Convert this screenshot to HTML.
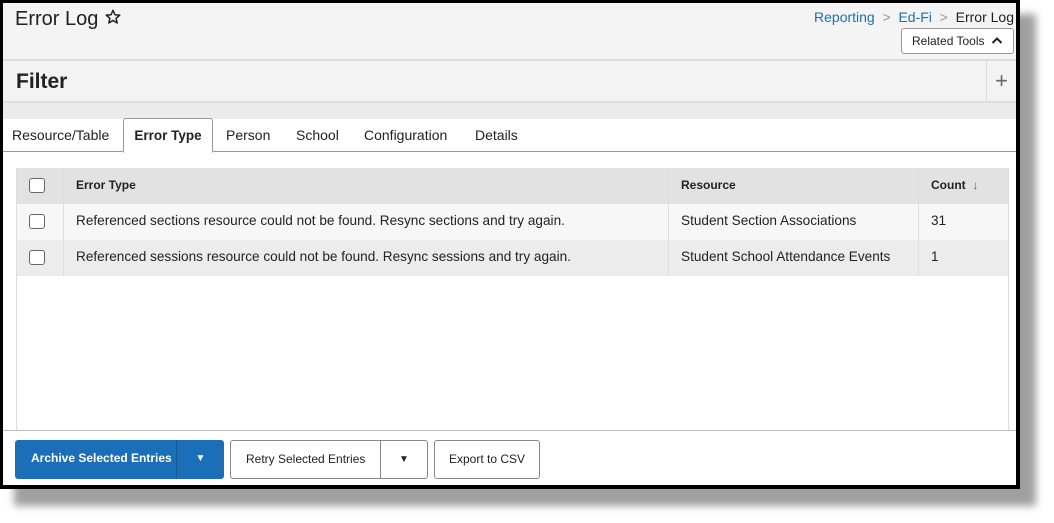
<!DOCTYPE html>
<html><head><style>
*{box-sizing:border-box;margin:0;padding:0}
body{width:1054px;height:523px;background:#fff;position:relative;overflow:hidden;font-family:"Liberation Sans",Arial,sans-serif;color:#222}
.shadow{position:absolute;left:14px;top:14px;width:1022px;height:492px;background:#888;filter:blur(4px);opacity:.8}
.frame{position:absolute;left:0;top:0;width:1020px;height:489px;background:#000}
.page{position:absolute;left:3px;top:3px;width:1013px;height:482px;background:#fff;overflow:hidden}
.top{position:absolute;left:0;top:0;width:1013px;height:56px;background:#f4f4f4}
.title{position:absolute;left:12px;top:5px;font-size:20px;color:#222}
.bc{position:absolute;right:2px;top:6px;font-size:14px;color:#999}
.bc a{color:#1a6fb5}
.rt{position:absolute;right:2px;top:25px;width:113px;height:26px;border:1px solid #999;border-radius:3px;background:#fff;font-size:12px;line-height:24px;padding-left:10px}
.filter{position:absolute;left:0;top:56px;width:1013px;height:44px;background:#f3f3f3;border-top:2px solid #ddd;border-bottom:2px solid #ddd}
.filter h1{position:absolute;left:13px;top:9px;font-size:21px;font-weight:bold}
.plus{position:absolute;right:0;top:0;width:30px;height:42px;border-left:1px solid #ddd;font-size:22px;color:#666;text-align:center;line-height:40px}
.gap{position:absolute;left:0;top:100px;width:1013px;height:16px;background:#ebebeb}
.tabs{position:absolute;left:0;top:116px;width:1013px;height:33px;border-bottom:1px solid #999;font-size:14px}
.tab{position:absolute;top:8px}
.act{position:absolute;left:120px;top:-1px;width:90px;height:35px;border:1px solid #999;border-bottom:1px solid #fff;background:#fff;border-radius:3px 3px 0 0;text-align:center;padding-top:9px;font-weight:bold;font-size:13.5px}
.tbl{position:absolute;left:13px;top:165px;width:993px;height:262px;border-left:1px solid #ddd;border-right:1px solid #ddd}
.row{position:absolute;left:0;width:991px;height:36px;font-size:13.6px}
.row div{position:absolute;top:0;height:36px;line-height:34px}
.cb{position:absolute;left:12px;top:10px;width:16px;height:15px;border:1px solid #666;border-radius:3px;background:#fff}
.c1{left:46px;border-left:1px solid #ddd;padding-left:12px;width:605px}
.c2{left:651px;border-left:1px solid #ddd;padding-left:12px;width:250px}
.c3{left:901px;border-left:1px solid #ddd;padding-left:12px;width:90px}
.h{font-size:12px;font-weight:bold}
.foot{position:absolute;left:0;top:427px;width:1013px;height:1px;background:#bbb}
.btn{position:absolute;top:437px;height:39px;border-radius:3px;font-size:12px;line-height:37px}
</style></head><body>
<div class="shadow"></div>
<div class="frame"></div>
<div class="page">
 <div class="top">
  <div class="title">Error Log <svg width="18" height="18" viewBox="0 0 24 24" style="vertical-align:-1px"><path d="M12 3l2.6 6 6.4.5-4.9 4.2 1.5 6.3L12 16.6 6.4 20l1.5-6.3L3 9.5l6.4-.5z" fill="none" stroke="#222" stroke-width="2" stroke-linejoin="round"/></svg></div>
  <div class="bc"><a>Reporting</a> &nbsp;&gt;&nbsp; <a>Ed-Fi</a> &nbsp;&gt;&nbsp; <span style="color:#222">Error Log</span></div>
  <div class="rt">Related Tools <svg width="12" height="9" viewBox="0 0 12 9" style="margin-left:3px"><path d="M1.5 7L6 2.5 10.5 7" fill="none" stroke="#222" stroke-width="2"/></svg></div>
 </div>
 <div class="filter"><h1>Filter</h1><div class="plus">+</div></div>
 <div class="gap"></div>
 <div class="tabs">
  <span class="tab" style="left:9px">Resource/Table</span>
  <div class="act">Error Type</div>
  <span class="tab" style="left:223px">Person</span>
  <span class="tab" style="left:293px">School</span>
  <span class="tab" style="left:361px">Configuration</span>
  <span class="tab" style="left:472px">Details</span>
 </div>
 <div class="tbl">
  <div class="row h" style="top:0;background:#e2e2e2"><span class="cb"></span><div class="c1">Error Type</div><div class="c2">Resource</div><div class="c3">Count &nbsp;<span style="color:#1a6fb5">↓</span></div></div>
  <div class="row" style="top:36px;background:#f7f7f7"><span class="cb"></span><div class="c1">Referenced sections resource could not be found. Resync sections and try again.</div><div class="c2">Student Section Associations</div><div class="c3">31</div></div>
  <div class="row" style="top:72px;background:#ececec"><span class="cb"></span><div class="c1">Referenced sessions resource could not be found. Resync sessions and try again.</div><div class="c2">Student School Attendance Events</div><div class="c3">1</div></div>
 </div>
 <div class="foot"></div>
 <div class="btn" style="left:12px;width:209px;background:#1a6fb8;color:#fff;font-weight:bold">
  <span style="position:absolute;left:16px">Archive Selected Entries</span>
  <span style="position:absolute;left:161px;top:0;height:39px;border-left:1px solid #155a96;width:48px;text-align:center;font-size:10px">▼</span></div>
 <div class="btn" style="left:227px;width:198px;border:1px solid #888;background:#fff">
  <span style="position:absolute;left:15px">Retry Selected Entries</span>
  <span style="position:absolute;left:149px;top:0;height:37px;border-left:1px solid #888;width:47px;text-align:center;font-size:10px">▼</span></div>
 <div class="btn" style="left:431px;width:106px;border:1px solid #888;background:#fff;text-align:center">Export to CSV</div>
</div>
</body></html>
